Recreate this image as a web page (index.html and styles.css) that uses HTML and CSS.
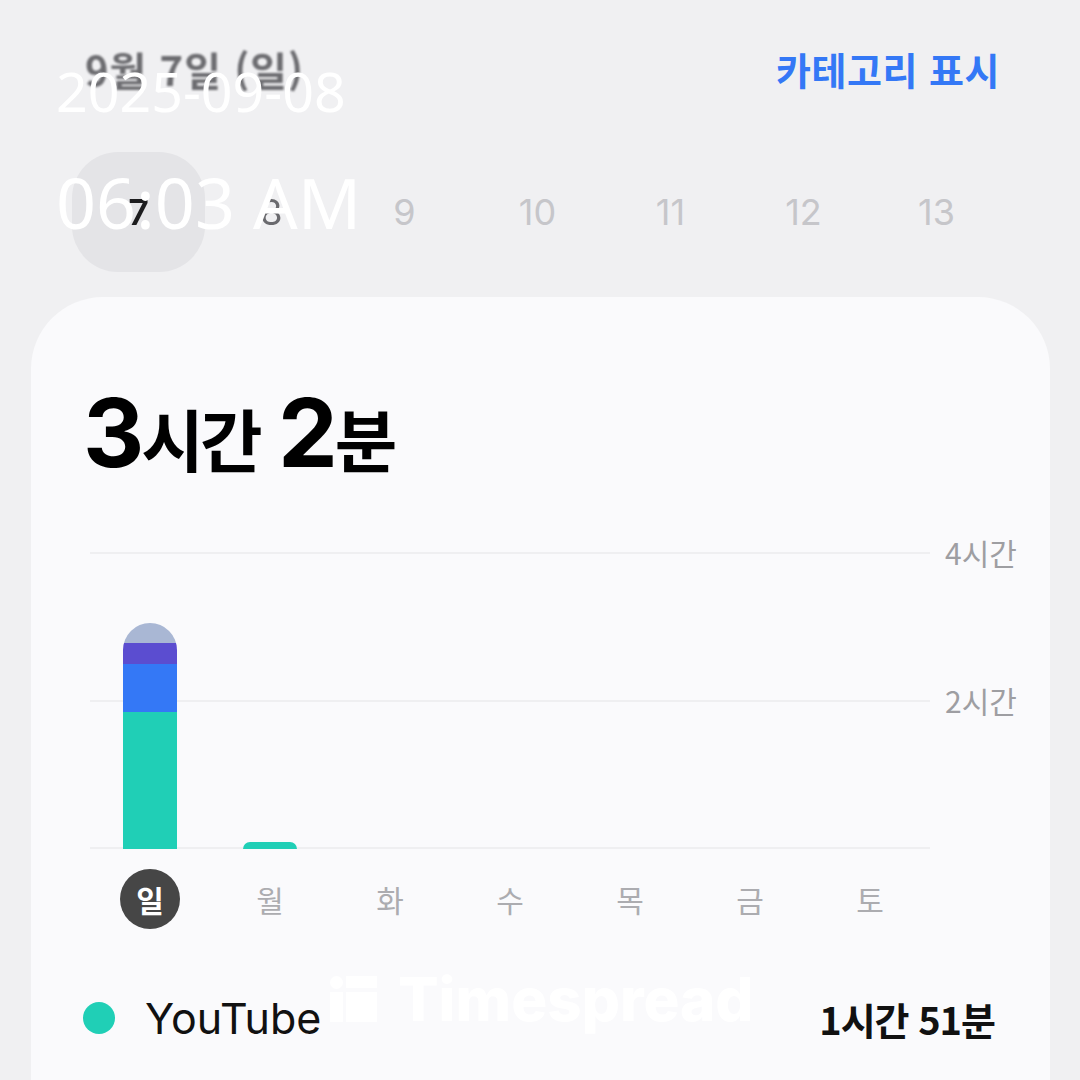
FILE: index.html
```html
<!DOCTYPE html>
<html lang="ko">
<head>
<meta charset="utf-8">
<title>Screen Time</title>
<link rel="stylesheet" href="styles.css">
</head>
<body>
  <div class="screen">
    <header class="header">
      <div class="date-title">9월 7일 (일)</div>
      <div class="cat-link">카테고리 표시</div>
    </header>

    <nav class="dates">
      <div class="date is-selected">7</div>
      <div class="date is-next">8</div>
      <div class="date">9</div>
      <div class="date">10</div>
      <div class="date">11</div>
      <div class="date">12</div>
      <div class="date">13</div>
    </nav>

    <section class="card">
      <h1 class="total"><span class="num">3</span><span class="unit">시간</span> <span class="num">2</span><span class="unit">분</span></h1>

      <div class="chart">
        <div class="plot">
          <div class="gridlines">
            <div class="gl"></div>
            <div class="gl gl-last"></div>
          </div>
          <div class="bars">
            <div class="col">
              <div class="bar">
                <div class="seg seg-other" style="height:20px"></div>
                <div class="seg seg-purple" style="height:21px"></div>
                <div class="seg seg-blue" style="height:48px"></div>
                <div class="seg seg-teal" style="height:137px"></div>
              </div>
            </div>
            <div class="col">
              <div class="bar bar-small">
                <div class="seg seg-teal" style="height:7px"></div>
              </div>
            </div>
            <div class="col"></div>
            <div class="col"></div>
            <div class="col"></div>
            <div class="col"></div>
            <div class="col"></div>
          </div>
        </div>
        <div class="ylabels">
          <div class="ylabel">4시간</div>
          <div class="ylabel">2시간</div>
        </div>
      </div>

      <div class="days">
        <div class="day"><span class="day-active">일</span></div>
        <div class="day">월</div>
        <div class="day">화</div>
        <div class="day">수</div>
        <div class="day">목</div>
        <div class="day">금</div>
        <div class="day">토</div>
      </div>

      <div class="legend-row">
        <span class="dot"></span>
        <span class="app-name">YouTube</span>
        <span class="app-time">1시간 51분</span>
      </div>
    </section>

    <div class="watermark">
      <svg class="wm-logo" width="47" height="46" viewBox="0 0 47 46">
        <circle cx="6.5" cy="6.5" r="6.5" fill="#ffffff"/>
        <rect x="0" y="16" width="13" height="30" fill="#ffffff"/>
        <rect x="16" y="0" width="31" height="12" fill="#ffffff"/>
        <rect x="16" y="16" width="31" height="30" fill="#ffffff"/>
      </svg>
      <span class="wm-text">Timespread</span>
    </div>

    <div class="stamp stamp-date">2025-09-08</div>
    <div class="stamp stamp-time">06:03 AM</div>
  </div>
</body>
</html>
```

FILE: styles.css
```css
* { box-sizing: border-box; }

html, body {
  margin: 0;
  padding: 0;
}

body {
  width: 1080px;
  height: 1080px;
  overflow: hidden;
  background: #f0f0f2;
  font-family: "Noto Sans CJK KR", "Noto Sans", sans-serif;
}

.screen {
  position: relative;
  width: 1080px;
  height: 1080px;
  overflow: hidden;
}

/* header */
.header {
  display: flex;
  justify-content: space-between;
  align-items: center;
  height: 48px;
  margin-top: 45px;
  padding: 0 80px 0 85px;
}

.date-title {
  font-size: 40px;
  font-weight: 700;
  color: #6c6c70;
  letter-spacing: 1px;
  filter: blur(0.8px);
}

.cat-link {
  font-size: 38px;
  font-weight: 700;
  color: #3478f6;
  line-height: 1;
  letter-spacing: 0.5px;
}

/* dates */
.dates {
  display: flex;
  margin-top: 59px;
  margin-left: 72px;
}

.date {
  width: 133px;
  height: 120px;
  display: flex;
  align-items: center;
  justify-content: center;
  font-family: Inter, "Noto Sans", sans-serif;
  font-size: 36px;
  color: #c6c6ca;
}

.date.is-selected {
  background: #e4e4e7;
  border-radius: 46px;
  color: #1c1c1e;
  font-weight: 600;
  filter: blur(0.6px);
}

.date.is-next {
  color: #6a6a6e;
  filter: blur(0.6px);
}

/* card */
.card {
  margin: 25px 0 0 31px;
  width: 1019px;
  height: 800px;
  background: #fafafc;
  border-radius: 72px 72px 0 0;
  padding: 88px 0 0 52px;
}

.total {
  margin: 0;
  font-family: Inter, "Noto Sans CJK KR", sans-serif;
  font-size: 95px;
  line-height: 95px;
  font-weight: 700;
  color: #000;
  letter-spacing: -3px;
}

.total .unit {
  font-family: "Noto Sans CJK KR", sans-serif;
  font-size: 68px;
  line-height: 68px;
  letter-spacing: -4px;
}

/* chart */
.chart {
  display: flex;
  align-items: flex-start;
  margin-top: 72px;
  margin-left: 7px;
}

.plot {
  display: grid;
  width: 840px;
  height: 297px;
}

.gridlines,
.bars {
  grid-area: 1 / 1;
}

.gridlines {
  display: flex;
  flex-direction: column;
}

.gl {
  height: 148px;
  border-top: 2px solid #efeff1;
}

.gl-last {
  height: 149px;
  border-bottom: 2px solid #efeff1;
}

.bars {
  display: flex;
  align-items: flex-end;
}

.col {
  width: 120px;
  display: flex;
  justify-content: center;
  align-items: flex-end;
}

.bar {
  width: 54px;
  display: flex;
  flex-direction: column;
  border-radius: 27px 27px 0 0;
  overflow: hidden;
}

.bar-small {
  border-radius: 8px 8px 0 0;
}

.seg-other { background: #a9b7d4; }
.seg-purple { background: #5b4dd0; }
.seg-blue { background: #3478f6; }
.seg-teal { background: #20cfb6; }

.ylabels {
  display: flex;
  flex-direction: column;
  gap: 118px;
  margin-top: -15px;
  margin-left: 15px;
}

.ylabel {
  height: 30px;
  line-height: 30px;
  font-size: 30px;
  color: #9e9ea2;
  letter-spacing: 0;
}

/* day labels */
.days {
  display: flex;
  margin-top: 20px;
  margin-left: 7px;
}

.day {
  width: 120px;
  height: 60px;
  display: flex;
  align-items: center;
  justify-content: center;
  font-size: 30px;
  color: #acacb0;
}

.day-active {
  width: 60px;
  height: 60px;
  border-radius: 50%;
  background: #464646;
  color: #ffffff;
  font-weight: 700;
  display: flex;
  align-items: center;
  justify-content: center;
}

/* legend */
.legend-row {
  display: flex;
  align-items: center;
  width: 912px;
  height: 60px;
  margin-top: 59px;
}

.dot {
  width: 32px;
  height: 32px;
  border-radius: 50%;
  background: #20cfb6;
  flex: none;
}

.app-name {
  margin-left: 30px;
  font-family: Inter, "Noto Sans", sans-serif;
  font-size: 43px;
  color: #111;
  letter-spacing: 0;
}

.app-time {
  margin-left: auto;
  font-size: 38px;
  font-weight: 600;
  color: #111;
  letter-spacing: -1px;
}

/* watermark overlay */
.watermark {
  position: absolute;
  left: 330px;
  top: 976px;
  display: flex;
  align-items: center;
  gap: 21px;
}

.wm-text {
  font-family: Inter, sans-serif;
  font-size: 60px;
  font-weight: 800;
  color: #ffffff;
  line-height: 46px;
  letter-spacing: 0;
}

/* timestamp overlay */
.stamp {
  position: absolute;
  left: 56px;
  font-family: "Noto Sans", sans-serif;
  color: #ffffff;
  line-height: 1;
  white-space: nowrap;
}

.stamp-date {
  top: 63px;
  font-size: 55.5px;
}

.stamp-time {
  top: 167px;
  font-size: 70px;
}
```
